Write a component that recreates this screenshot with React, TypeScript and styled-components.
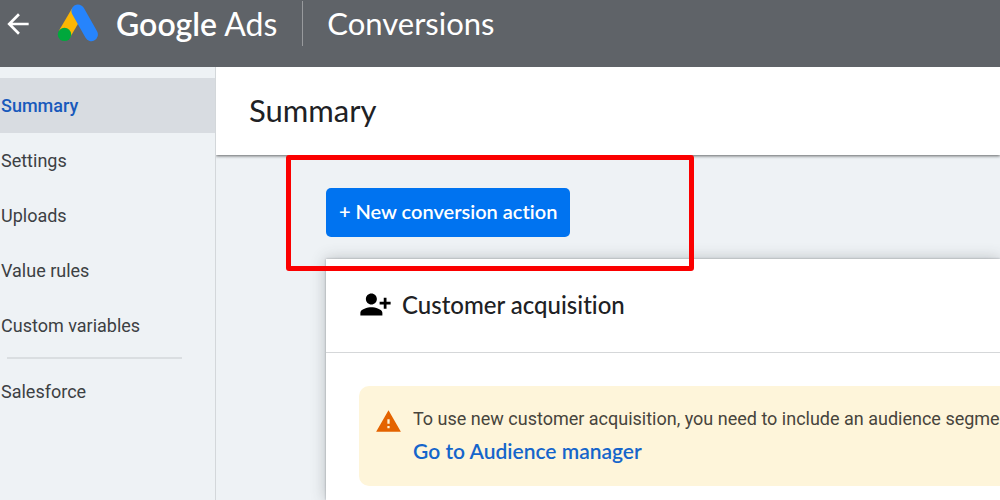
import React from 'react';
import styled, { createGlobalStyle, css } from 'styled-components';

const GlobalStyle = createGlobalStyle`
  *, *::before, *::after { box-sizing: border-box; }
  body {
    margin: 0;
    background: #eef2f5;
    color: #202124;
    font-family: Roboto, "Liberation Sans", sans-serif;
    font-size: 18px;
    overflow: hidden;
  }
  h1, h2, p, ul { margin: 0; padding: 0; font-weight: 400; }
`;

const display = css`
  font-family: Lato, "Open Sans", sans-serif;
  font-variant-ligatures: none;
`;

const Page = styled.div`
  display: flex;
  flex-direction: column;
  min-height: 100vh;
`;

const Header = styled.header`
  display: flex;
  align-items: center;
  padding: 1px 0 21px 2px;
  background: #5f6368;
  color: #fff;
`;

const BackButton = styled.button`
  display: flex;
  padding: 0;
  border: 0;
  background: none;
  color: inherit;
  cursor: pointer;
`;

const Brand = styled.a`
  display: flex;
  align-items: center;
  gap: 16px;
  margin-left: 22px;
  padding-right: 25px;
  border-right: 1px solid #989a9d;
  color: inherit;
  text-decoration: none;
`;

const Wordmark = styled.span`
  ${display}
  font-size: 32px;
  line-height: 45px;
  white-space: nowrap;
`;

const Product = styled.span`
  font-weight: 600;
`;

const Section = styled.span`
  ${display}
  margin-left: 24px;
  font-size: 31px;
  line-height: 45px;
`;

const Body = styled.div`
  display: flex;
  flex: 1;
`;

const Sidebar = styled.nav`
  flex: 0 0 216px;
  padding-top: 11px;
  border-right: 1px solid #d3d7da;
`;

const NavList = styled.ul`
  list-style: none;
`;

const NavLink = styled.a<{ $active?: boolean }>`
  display: block;
  padding-left: 1px;
  line-height: 55px;
  text-decoration: none;
  color: ${(p) => (p.$active ? '#185abc' : '#3c4043')};
  font-weight: ${(p) => (p.$active ? 500 : 400)};
  background: ${(p) => (p.$active ? '#d8dce1' : 'transparent')};
`;

const NavDivider = styled.hr`
  margin: 4px 33px 5px 7px;
  border: 0;
  border-top: 2px solid #dadee1;
`;

const Main = styled.main`
  display: flex;
  flex: 1;
  flex-direction: column;
  min-width: 0;
`;

const TitleBar = styled.div`
  padding: 0 33px 2px;
  background: #fff;
  box-shadow: 0 1px 3px rgba(0, 0, 0, 0.6);
  clip-path: inset(0 0 -6px 0);
`;

const Title = styled.h1`
  ${display}
  font-size: 31px;
  line-height: 86px;
`;

const Content = styled.div`
  display: flex;
  flex: 1;
  flex-direction: column;
  padding-left: 110px;
`;

const Toolbar = styled.div`
  position: relative;
  padding: 33px 0 22px;
`;

const PrimaryButton = styled.button`
  ${display}
  display: block;
  padding: 0 13px 2px;
  border: 0;
  border-radius: 5px;
  background: #0073f0;
  color: #fff;
  font-size: 20px;
  font-weight: 600;
  line-height: 47px;
  white-space: nowrap;
  cursor: pointer;
`;

const Highlight = styled.div`
  position: absolute;
  z-index: 1;
  top: 0;
  left: -40px;
  width: 408px;
  height: 116px;
  border: 5px solid #fb0000;
  border-radius: 3px;
  pointer-events: none;
`;

const Card = styled.section`
  flex: 1;
  background: #fff;
  box-shadow: 0 0 14px rgba(60, 64, 67, 0.3), 0 0 2px rgba(60, 64, 67, 0.4);
`;

const CardHeader = styled.div`
  display: flex;
  align-items: center;
  gap: 10px;
  height: 94px;
  padding: 0 33px 2px;
  border-bottom: 1px solid #d5d7d9;
`;

const CardTitle = styled.h2`
  ${display}
  font-size: 24px;
  font-weight: 500;
  line-height: 32px;
`;

const Alert = styled.div`
  display: flex;
  gap: 11px;
  margin: 33px 0 14px 33px;
  padding: 16px 0 18px 16px;
  border-radius: 10px 0 0 10px;
  background: #fef5da;
  overflow: hidden;
`;

const AlertIcon = styled.span`
  flex: none;
  padding-top: 6px;
`;

const AlertText = styled.p`
  color: #47443c;
  line-height: 33px;
  white-space: nowrap;
`;

const AlertLink = styled.a`
  ${display}
  display: block;
  padding-bottom: 2px;
  color: #1565cb;
  font-size: 21px;
  font-weight: 600;
  line-height: 31px;
  text-decoration: none;
`;

const Icon = styled.svg`
  display: block;
  flex: none;
  fill: currentColor;
`;

const navItems = ['Summary', 'Settings', 'Uploads', 'Value rules', 'Custom variables'];

export default function App() {
  return (
    <Page>
      <GlobalStyle />
      <Header>
        <BackButton type="button" aria-label="Back">
          <Icon width="32" height="32" viewBox="0 0 24 24">
            <path d="M20 11H7.83l5.59-5.59L12 4l-8 8 8 8 1.41-1.41L7.83 13H20v-2z" />
          </Icon>
        </BackButton>
        <Brand href="#">
          <Icon width="44" height="40" viewBox="0 0 44 40" aria-hidden="true">
            <path d="M22 7 8.5 30" stroke="#fbb604" strokeWidth="13" />
            <path d="M22 7 35.3 30.6" stroke="#2684fc" strokeWidth="13.2" strokeLinecap="round" />
            <circle cx="8.5" cy="30.4" r="6.7" fill="#00a83c" />
          </Icon>
          <Wordmark>
            <Product>Google</Product> Ads
          </Wordmark>
        </Brand>
        <Section>Conversions</Section>
      </Header>
      <Body>
        <Sidebar aria-label="Conversions">
          <NavList>
            {navItems.map((item, i) => (
              <li key={item}>
                <NavLink href="#" $active={i === 0}>{item}</NavLink>
              </li>
            ))}
          </NavList>
          <NavDivider />
          <NavList>
            <li>
              <NavLink href="#">Salesforce</NavLink>
            </li>
          </NavList>
        </Sidebar>
        <Main>
          <TitleBar>
            <Title>Summary</Title>
          </TitleBar>
          <Content>
            <Toolbar>
              <PrimaryButton type="button">+ New conversion action</PrimaryButton>
              <Highlight />
            </Toolbar>
            <Card>
              <CardHeader>
                <Icon width="33" height="33" viewBox="0 0 24 24" color="#000" aria-hidden="true">
                  <path d="M13 8c0-2.21-1.79-4-4-4S5 5.79 5 8s1.79 4 4 4 4-1.79 4-4zm2 2v2h3v3h2v-3h3v-2h-3V7h-2v3h-3zM1 18v2h16v-2c0-2.66-5.33-4-8-4s-8 1.34-8 4z" />
                </Icon>
                <CardTitle>Customer acquisition</CardTitle>
              </CardHeader>
              <Alert>
                <AlertIcon>
                  <Icon width="27" height="27" viewBox="0 0 24 24" color="#e46300" aria-hidden="true">
                    <path d="M1 21h22L12 2 1 21zm12-3h-2v-2h2v2zm0-4h-2v-4h2v4z" />
                  </Icon>
                </AlertIcon>
                <div>
                  <AlertText>
                    To use new customer acquisition, you need to include an audience segment
                  </AlertText>
                  <AlertLink href="#">Go to Audience manager</AlertLink>
                </div>
              </Alert>
            </Card>
          </Content>
        </Main>
      </Body>
    </Page>
  );
}
